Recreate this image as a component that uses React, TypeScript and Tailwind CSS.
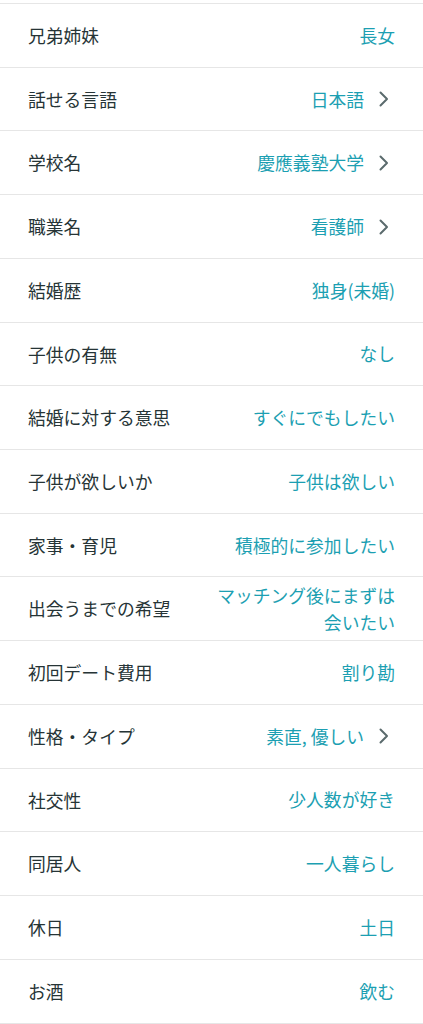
import React from "react";

type Row = { label: string; value: string[]; chevron?: boolean };

const rows: Row[] = [
  { label: "兄弟姉妹", value: ["長女"] },
  { label: "話せる言語", value: ["日本語"], chevron: true },
  { label: "学校名", value: ["慶應義塾大学"], chevron: true },
  { label: "職業名", value: ["看護師"], chevron: true },
  { label: "結婚歴", value: ["独身(未婚)"] },
  { label: "子供の有無", value: ["なし"] },
  { label: "結婚に対する意思", value: ["すぐにでもしたい"] },
  { label: "子供が欲しいか", value: ["子供は欲しい"] },
  { label: "家事・育児", value: ["積極的に参加したい"] },
  { label: "出会うまでの希望", value: ["マッチング後にまずは", "会いたい"] },
  { label: "初回デート費用", value: ["割り勘"] },
  { label: "性格・タイプ", value: ["素直, 優しい"], chevron: true },
  { label: "社交性", value: ["少人数が好き"] },
  { label: "同居人", value: ["一人暮らし"] },
  { label: "休日", value: ["土日"] },
  { label: "お酒", value: ["飲む"] },
];

function Chevron() {
  return (
    <svg width="12" height="18" viewBox="0 0 12 18" className="ml-[14px] mr-[5px] shrink-0">
      <path d="M2.5 2.5 L9 9 L2.5 15.5" fill="none" stroke="#5b6b6d" strokeWidth="2" strokeLinecap="round" strokeLinejoin="round" />
    </svg>
  );
}

export default function App() {
  return (
    <div
      className="w-[423px] h-[1024px] overflow-hidden bg-white pt-[3px]"
      style={{ fontFamily: '"Noto Sans CJK JP", "Noto Sans", sans-serif' }}
    >
      <div className="border-t border-[#e6e6e6]">
        {rows.map((r) => (
          <div
            key={r.label}
            className="h-[63.73px] border-b border-[#e6e6e6] flex items-center pl-[28px] pr-[28px]"
          >
            <div className="text-[17.8px] text-[#263436] whitespace-nowrap">{r.label}</div>
            <div className="flex-1 flex items-center justify-end">
              <div className="text-[17.8px] text-[#1c9fb2] text-right leading-[27px]">
                {r.value.map((v, i) => (
                  <div key={i}>{v}</div>
                ))}
              </div>
              {r.chevron && <Chevron />}
            </div>
          </div>
        ))}
      </div>
    </div>
  );
}
